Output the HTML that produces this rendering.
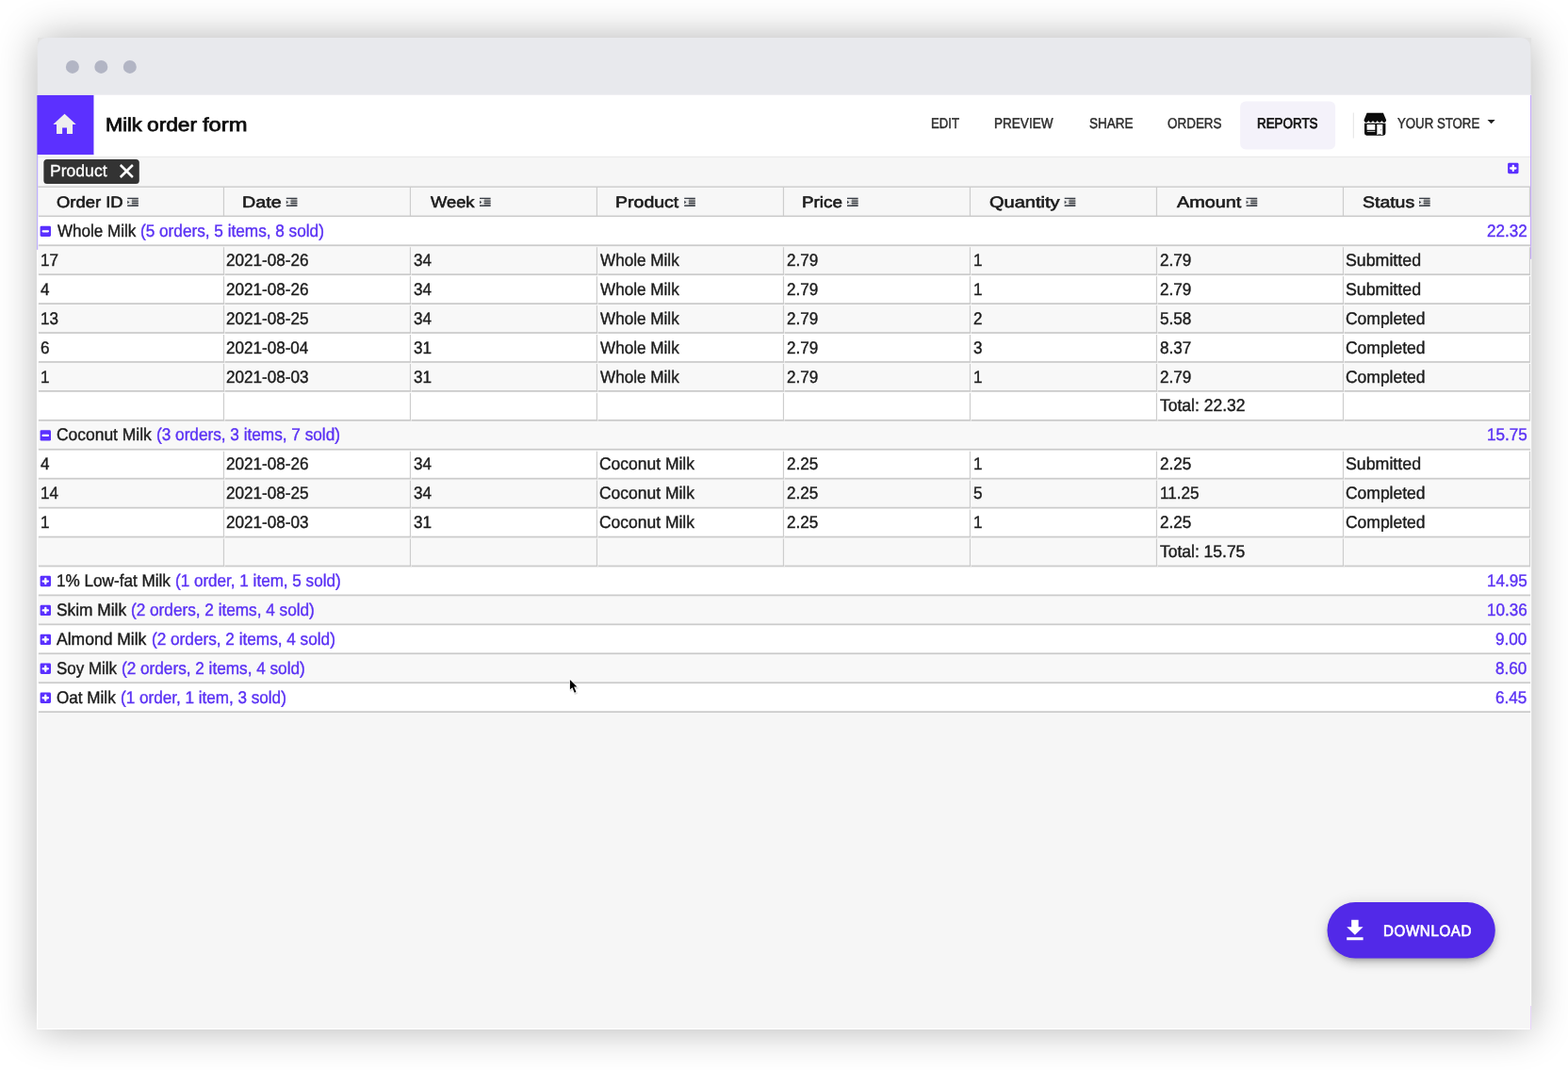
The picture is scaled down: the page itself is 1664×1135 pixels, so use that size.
<!DOCTYPE html>
<html lang="en"><head><meta charset="utf-8"><title>Milk order form - Reports</title>
<style>
html,body{margin:0;padding:0;background:#fff;}
body{width:1664px;height:1135px;position:relative;overflow:hidden;font-family:"Liberation Sans",sans-serif;text-rendering:geometricPrecision;}
#root{position:absolute;left:0;top:0;width:1664px;height:1135px;will-change:transform;}
.L{position:absolute;}
.t{position:absolute;white-space:pre;line-height:1;transform-origin:0 50%;}
.a{position:absolute;}
#shadow{position:absolute;left:40px;top:40px;width:1585px;height:1052px;box-shadow:0 0 40px rgba(0,0,0,.30);background:#e3e3e3;}
#bg{position:absolute;left:0;top:0;}
#dl{position:absolute;left:1409px;top:958px;width:177px;height:58px;border-radius:29px;background:#5229e8;box-shadow:0 3px 5px -1px rgba(0,0,0,.2),0 6px 10px rgba(0,0,0,.14),0 1px 18px rgba(0,0,0,.12);}
</style></head><body><div id="root">
<div id="shadow"></div>

<svg id="bg" width="1664" height="1135" viewBox="0 0 1664 1135"><rect x="39.3" y="99.9" width="1585.8" height="992.1" fill="#f6f6f6"/>
<path d="M39.8 49.9a10 10 0 0 1 10-10H1614.1a10 10 0 0 1 10 10V100.8H39.8z" fill="#e8e9ed"/>
<rect x="39.3" y="1090.9" width="1584.7" height="1.1" fill="#fff"/>
<rect x="1624" y="1067" width="1.1" height="25" fill="#e8d5fa"/>
<circle cx="76.9" cy="70.9" r="7" fill="#b2b5c4"/>
<circle cx="107.3" cy="70.9" r="7" fill="#b2b5c4"/>
<circle cx="137.8" cy="70.9" r="7" fill="#b2b5c4"/>
<rect x="39.3" y="100.8" width="1585.8" height="65" fill="#fff"/>
<rect x="39.3" y="99.9" width="60.15" height="1.05" fill="#f3f5ef"/>
<rect x="39.3" y="165.8" width="1585.8" height="1.3" fill="#ebebeb"/>
<rect x="39.3" y="100.9" width="60.15" height="63" fill="#5c30ff"/>
<rect x="39.3" y="163.5" width="60.15" height=".7" fill="#4a1cf5" opacity=".6"/>
<svg x="53.95" y="117.05" width="29.2" height="29.9" viewBox="0 0 24 24" preserveAspectRatio="none"><path fill="#eee" d="M10 20v-5.1h4V20h5v-8h3L12 3 2 12h3v8z"/></svg>
<rect x="1316.1" y="107.6" width="101" height="50.9" rx="6" fill="#f4f2fa"/>
<rect x="1435.8" y="119.6" width="1.1" height="27" fill="#e6e6e6"/>
<g transform="translate(1447 119)"><path fill="#0b0b0b" d="M3.6 .7h17.3l3.2 7.6c.1 1.3-.9 2.6-2.35 2.6s-2.35-1.1-2.35-2.3c0 1.2-1 2.3-2.35 2.3S14.7 9.8 14.7 8.6c0 1.2-1 2.3-2.35 2.3S10 9.8 10 8.6c0 1.2-1 2.3-2.35 2.3S5.3 9.8 5.3 8.6c0 1.2-1 2.3-2.35 2.3S.4 9.6.5 8.3z"/><path fill="#0b0b0b" d="M1 11.8h22.4v10.5a2.4 2.4 0 0 1-2.4 2.4H3.4A2.4 2.4 0 0 1 1 22.3z"/><rect x="3.6" y="13" width="8.7" height="5.8" fill="#fff"/><rect x="3.8" y="19.9" width="8.5" height=".9" fill="#ddd"/><rect x="14.3" y="13" width="6" height="11" fill="#fff"/><rect x="15.3" y="23.3" width="3.4" height=".8" fill="#333"/><circle cx="18.7" cy="18.8" r=".55" fill="#555"/></g>
<path fill="#222" d="M1578.5 127h8.2l-4.1 4.3z"/>
<rect x="45.6" y="168.4" width="103" height="27.4" rx="4" fill="#fff" opacity=".7"/>
<rect x="46.35" y="169.1" width="101.45" height="25.9" rx="3.5" fill="#333"/>
<path stroke="#fff" stroke-width="2.5" fill="none" d="M127.8 175l13.1 13M140.9 175l-13.1 13"/>
<rect x="1600.1" y="172.8" width="11.4" height="11.35" rx="1.4" fill="#5a30ff"/><path stroke="#fff" stroke-width="2.3" stroke-linecap="round" fill="none" d="M1603.15 178.5h5.3M1605.8 175.95v5.1"/>
<rect x="39.3" y="198.2" width="1584.15" height="31.1" fill="#f7f7f7"/>
<rect x="39.3" y="229.3" width="1584.15" height="30.93" fill="#fff"/>
<rect x="39.3" y="260.23" width="1584.15" height="30.93" fill="#f8f8f8"/>
<rect x="39.3" y="291.16" width="1584.15" height="30.93" fill="#fff"/>
<rect x="39.3" y="322.09" width="1584.15" height="30.93" fill="#f8f8f8"/>
<rect x="39.3" y="353.02" width="1584.15" height="30.93" fill="#fff"/>
<rect x="39.3" y="383.95" width="1584.15" height="30.93" fill="#f8f8f8"/>
<rect x="39.3" y="414.88" width="1584.15" height="30.93" fill="#fff"/>
<rect x="39.3" y="445.81" width="1584.15" height="30.93" fill="#f8f8f8"/>
<rect x="39.3" y="476.74" width="1584.15" height="30.93" fill="#fff"/>
<rect x="39.3" y="507.67" width="1584.15" height="30.93" fill="#f8f8f8"/>
<rect x="39.3" y="538.6" width="1584.15" height="30.93" fill="#fff"/>
<rect x="39.3" y="569.53" width="1584.15" height="30.93" fill="#f8f8f8"/>
<rect x="39.3" y="600.46" width="1584.15" height="30.93" fill="#fff"/>
<rect x="39.3" y="631.39" width="1584.15" height="30.93" fill="#f8f8f8"/>
<rect x="39.3" y="662.32" width="1584.15" height="30.93" fill="#fff"/>
<rect x="39.3" y="693.25" width="1584.15" height="30.93" fill="#f8f8f8"/>
<rect x="39.3" y="724.18" width="1584.15" height="30.93" fill="#fff"/>
<rect x="1624" y="166.5" width="1.1" height="900.5" fill="#fbfbfb"/>
<rect x="39.1" y="264" width="1.15" height="828" fill="#fff"/>
<rect x="1624" y="100.8" width="1.1" height="174" fill="#c4a9fa"/>
<rect x="39.1" y="163.9" width="1.1" height="101" fill="#b9a8ff"/>
<rect x="236.85" y="198.2" width="1.2" height="31.1" fill="#cdcdcd"/>
<rect x="434.85" y="198.2" width="1.2" height="31.1" fill="#cdcdcd"/>
<rect x="632.85" y="198.2" width="1.2" height="31.1" fill="#cdcdcd"/>
<rect x="830.85" y="198.2" width="1.2" height="31.1" fill="#cdcdcd"/>
<rect x="1028.85" y="198.2" width="1.2" height="31.1" fill="#cdcdcd"/>
<rect x="1226.85" y="198.2" width="1.2" height="31.1" fill="#cdcdcd"/>
<rect x="1424.85" y="198.2" width="1.2" height="31.1" fill="#cdcdcd"/>
<rect x="1622.85" y="198.2" width="1.2" height="31.1" fill="#cdcdcd"/>
<rect x="236.85" y="260.23" width="1.2" height="185.58" fill="#cdcdcd"/>
<rect x="434.85" y="260.23" width="1.2" height="185.58" fill="#cdcdcd"/>
<rect x="632.85" y="260.23" width="1.2" height="185.58" fill="#cdcdcd"/>
<rect x="830.85" y="260.23" width="1.2" height="185.58" fill="#cdcdcd"/>
<rect x="1028.85" y="260.23" width="1.2" height="185.58" fill="#cdcdcd"/>
<rect x="1226.85" y="260.23" width="1.2" height="185.58" fill="#cdcdcd"/>
<rect x="1424.85" y="260.23" width="1.2" height="185.58" fill="#cdcdcd"/>
<rect x="1622.85" y="260.23" width="1.2" height="185.58" fill="#cdcdcd"/>
<rect x="236.85" y="476.74" width="1.2" height="123.72" fill="#cdcdcd"/>
<rect x="434.85" y="476.74" width="1.2" height="123.72" fill="#cdcdcd"/>
<rect x="632.85" y="476.74" width="1.2" height="123.72" fill="#cdcdcd"/>
<rect x="830.85" y="476.74" width="1.2" height="123.72" fill="#cdcdcd"/>
<rect x="1028.85" y="476.74" width="1.2" height="123.72" fill="#cdcdcd"/>
<rect x="1226.85" y="476.74" width="1.2" height="123.72" fill="#cdcdcd"/>
<rect x="1424.85" y="476.74" width="1.2" height="123.72" fill="#cdcdcd"/>
<rect x="1622.85" y="476.74" width="1.2" height="123.72" fill="#cdcdcd"/>
<rect x="40.3" y="197.5" width="1583.75" height="1.4" fill="#cbcbcb"/>
<rect x="40.9" y="228.55" width="1583.15" height="1.55" fill="#cbcbcb"/>
<rect x="40.9" y="259.38" width="1583.15" height="1.75" fill="#cbcbcb"/>
<rect x="40.9" y="290.31" width="1583.15" height="1.75" fill="#cbcbcb"/>
<rect x="40.9" y="321.24" width="1583.15" height="1.75" fill="#cbcbcb"/>
<rect x="40.9" y="352.16" width="1583.15" height="1.75" fill="#cbcbcb"/>
<rect x="40.9" y="383.1" width="1583.15" height="1.75" fill="#cbcbcb"/>
<rect x="40.9" y="414.02" width="1583.15" height="1.75" fill="#cbcbcb"/>
<rect x="40.9" y="444.95" width="1583.15" height="1.75" fill="#cbcbcb"/>
<rect x="40.9" y="475.88" width="1583.15" height="1.75" fill="#cbcbcb"/>
<rect x="40.9" y="506.81" width="1583.15" height="1.75" fill="#cbcbcb"/>
<rect x="40.9" y="537.75" width="1583.15" height="1.75" fill="#cbcbcb"/>
<rect x="40.9" y="568.67" width="1583.15" height="1.75" fill="#cbcbcb"/>
<rect x="40.9" y="599.61" width="1583.15" height="1.75" fill="#cbcbcb"/>
<rect x="40.9" y="630.53" width="1583.15" height="1.75" fill="#cbcbcb"/>
<rect x="40.9" y="661.46" width="1583.15" height="1.75" fill="#cbcbcb"/>
<rect x="40.9" y="692.39" width="1583.15" height="1.75" fill="#cbcbcb"/>
<rect x="40.9" y="723.33" width="1583.15" height="1.75" fill="#cbcbcb"/>
<rect x="40.9" y="754.25" width="1583.15" height="1.75" fill="#cbcbcb"/>
<rect x="236.65" y="261.18" width="1.6" height="1.05" fill="#f8f8f8"/>
<rect x="434.65" y="261.18" width="1.6" height="1.05" fill="#f8f8f8"/>
<rect x="632.65" y="261.18" width="1.6" height="1.05" fill="#f8f8f8"/>
<rect x="830.65" y="261.18" width="1.6" height="1.05" fill="#f8f8f8"/>
<rect x="1028.65" y="261.18" width="1.6" height="1.05" fill="#f8f8f8"/>
<rect x="1226.65" y="261.18" width="1.6" height="1.05" fill="#f8f8f8"/>
<rect x="1424.65" y="261.18" width="1.6" height="1.05" fill="#f8f8f8"/>
<rect x="1622.65" y="261.18" width="1.6" height="1.05" fill="#f8f8f8"/>
<rect x="236.65" y="292.11" width="1.6" height="1.05" fill="#fff"/>
<rect x="238.1" y="290.21" width=".85" height="1.95" fill="#eee"/>
<rect x="434.65" y="292.11" width="1.6" height="1.05" fill="#fff"/>
<rect x="436.1" y="290.21" width=".85" height="1.95" fill="#eee"/>
<rect x="632.65" y="292.11" width="1.6" height="1.05" fill="#fff"/>
<rect x="634.1" y="290.21" width=".85" height="1.95" fill="#eee"/>
<rect x="830.65" y="292.11" width="1.6" height="1.05" fill="#fff"/>
<rect x="832.1" y="290.21" width=".85" height="1.95" fill="#eee"/>
<rect x="1028.65" y="292.11" width="1.6" height="1.05" fill="#fff"/>
<rect x="1030.1" y="290.21" width=".85" height="1.95" fill="#eee"/>
<rect x="1226.65" y="292.11" width="1.6" height="1.05" fill="#fff"/>
<rect x="1228.1" y="290.21" width=".85" height="1.95" fill="#eee"/>
<rect x="1424.65" y="292.11" width="1.6" height="1.05" fill="#fff"/>
<rect x="1426.1" y="290.21" width=".85" height="1.95" fill="#eee"/>
<rect x="1622.65" y="292.11" width="1.6" height="1.05" fill="#fff"/>
<rect x="236.65" y="323.04" width="1.6" height="1.05" fill="#f8f8f8"/>
<rect x="238.1" y="321.14" width=".85" height="1.95" fill="#eee"/>
<rect x="434.65" y="323.04" width="1.6" height="1.05" fill="#f8f8f8"/>
<rect x="436.1" y="321.14" width=".85" height="1.95" fill="#eee"/>
<rect x="632.65" y="323.04" width="1.6" height="1.05" fill="#f8f8f8"/>
<rect x="634.1" y="321.14" width=".85" height="1.95" fill="#eee"/>
<rect x="830.65" y="323.04" width="1.6" height="1.05" fill="#f8f8f8"/>
<rect x="832.1" y="321.14" width=".85" height="1.95" fill="#eee"/>
<rect x="1028.65" y="323.04" width="1.6" height="1.05" fill="#f8f8f8"/>
<rect x="1030.1" y="321.14" width=".85" height="1.95" fill="#eee"/>
<rect x="1226.65" y="323.04" width="1.6" height="1.05" fill="#f8f8f8"/>
<rect x="1228.1" y="321.14" width=".85" height="1.95" fill="#eee"/>
<rect x="1424.65" y="323.04" width="1.6" height="1.05" fill="#f8f8f8"/>
<rect x="1426.1" y="321.14" width=".85" height="1.95" fill="#eee"/>
<rect x="1622.65" y="323.04" width="1.6" height="1.05" fill="#f8f8f8"/>
<rect x="236.65" y="353.97" width="1.6" height="1.05" fill="#fff"/>
<rect x="238.1" y="352.07" width=".85" height="1.95" fill="#eee"/>
<rect x="434.65" y="353.97" width="1.6" height="1.05" fill="#fff"/>
<rect x="436.1" y="352.07" width=".85" height="1.95" fill="#eee"/>
<rect x="632.65" y="353.97" width="1.6" height="1.05" fill="#fff"/>
<rect x="634.1" y="352.07" width=".85" height="1.95" fill="#eee"/>
<rect x="830.65" y="353.97" width="1.6" height="1.05" fill="#fff"/>
<rect x="832.1" y="352.07" width=".85" height="1.95" fill="#eee"/>
<rect x="1028.65" y="353.97" width="1.6" height="1.05" fill="#fff"/>
<rect x="1030.1" y="352.07" width=".85" height="1.95" fill="#eee"/>
<rect x="1226.65" y="353.97" width="1.6" height="1.05" fill="#fff"/>
<rect x="1228.1" y="352.07" width=".85" height="1.95" fill="#eee"/>
<rect x="1424.65" y="353.97" width="1.6" height="1.05" fill="#fff"/>
<rect x="1426.1" y="352.07" width=".85" height="1.95" fill="#eee"/>
<rect x="1622.65" y="353.97" width="1.6" height="1.05" fill="#fff"/>
<rect x="236.65" y="384.9" width="1.6" height="1.05" fill="#f8f8f8"/>
<rect x="238.1" y="383" width=".85" height="1.95" fill="#eee"/>
<rect x="434.65" y="384.9" width="1.6" height="1.05" fill="#f8f8f8"/>
<rect x="436.1" y="383" width=".85" height="1.95" fill="#eee"/>
<rect x="632.65" y="384.9" width="1.6" height="1.05" fill="#f8f8f8"/>
<rect x="634.1" y="383" width=".85" height="1.95" fill="#eee"/>
<rect x="830.65" y="384.9" width="1.6" height="1.05" fill="#f8f8f8"/>
<rect x="832.1" y="383" width=".85" height="1.95" fill="#eee"/>
<rect x="1028.65" y="384.9" width="1.6" height="1.05" fill="#f8f8f8"/>
<rect x="1030.1" y="383" width=".85" height="1.95" fill="#eee"/>
<rect x="1226.65" y="384.9" width="1.6" height="1.05" fill="#f8f8f8"/>
<rect x="1228.1" y="383" width=".85" height="1.95" fill="#eee"/>
<rect x="1424.65" y="384.9" width="1.6" height="1.05" fill="#f8f8f8"/>
<rect x="1426.1" y="383" width=".85" height="1.95" fill="#eee"/>
<rect x="1622.65" y="384.9" width="1.6" height="1.05" fill="#f8f8f8"/>
<rect x="236.65" y="415.83" width="1.6" height="1.05" fill="#fff"/>
<rect x="238.1" y="413.93" width=".85" height="1.95" fill="#eee"/>
<rect x="434.65" y="415.83" width="1.6" height="1.05" fill="#fff"/>
<rect x="436.1" y="413.93" width=".85" height="1.95" fill="#eee"/>
<rect x="632.65" y="415.83" width="1.6" height="1.05" fill="#fff"/>
<rect x="634.1" y="413.93" width=".85" height="1.95" fill="#eee"/>
<rect x="830.65" y="415.83" width="1.6" height="1.05" fill="#fff"/>
<rect x="832.1" y="413.93" width=".85" height="1.95" fill="#eee"/>
<rect x="1028.65" y="415.83" width="1.6" height="1.05" fill="#fff"/>
<rect x="1030.1" y="413.93" width=".85" height="1.95" fill="#eee"/>
<rect x="1226.65" y="415.83" width="1.6" height="1.05" fill="#fff"/>
<rect x="1228.1" y="413.93" width=".85" height="1.95" fill="#eee"/>
<rect x="1424.65" y="415.83" width="1.6" height="1.05" fill="#fff"/>
<rect x="1426.1" y="413.93" width=".85" height="1.95" fill="#eee"/>
<rect x="1622.65" y="415.83" width="1.6" height="1.05" fill="#fff"/>
<rect x="238.1" y="444.86" width=".85" height="1.95" fill="#eee"/>
<rect x="436.1" y="444.86" width=".85" height="1.95" fill="#eee"/>
<rect x="634.1" y="444.86" width=".85" height="1.95" fill="#eee"/>
<rect x="832.1" y="444.86" width=".85" height="1.95" fill="#eee"/>
<rect x="1030.1" y="444.86" width=".85" height="1.95" fill="#eee"/>
<rect x="1228.1" y="444.86" width=".85" height="1.95" fill="#eee"/>
<rect x="1426.1" y="444.86" width=".85" height="1.95" fill="#eee"/>
<rect x="236.65" y="477.69" width="1.6" height="1.05" fill="#fff"/>
<rect x="434.65" y="477.69" width="1.6" height="1.05" fill="#fff"/>
<rect x="632.65" y="477.69" width="1.6" height="1.05" fill="#fff"/>
<rect x="830.65" y="477.69" width="1.6" height="1.05" fill="#fff"/>
<rect x="1028.65" y="477.69" width="1.6" height="1.05" fill="#fff"/>
<rect x="1226.65" y="477.69" width="1.6" height="1.05" fill="#fff"/>
<rect x="1424.65" y="477.69" width="1.6" height="1.05" fill="#fff"/>
<rect x="1622.65" y="477.69" width="1.6" height="1.05" fill="#fff"/>
<rect x="236.65" y="508.62" width="1.6" height="1.05" fill="#f8f8f8"/>
<rect x="238.1" y="506.72" width=".85" height="1.95" fill="#eee"/>
<rect x="434.65" y="508.62" width="1.6" height="1.05" fill="#f8f8f8"/>
<rect x="436.1" y="506.72" width=".85" height="1.95" fill="#eee"/>
<rect x="632.65" y="508.62" width="1.6" height="1.05" fill="#f8f8f8"/>
<rect x="634.1" y="506.72" width=".85" height="1.95" fill="#eee"/>
<rect x="830.65" y="508.62" width="1.6" height="1.05" fill="#f8f8f8"/>
<rect x="832.1" y="506.72" width=".85" height="1.95" fill="#eee"/>
<rect x="1028.65" y="508.62" width="1.6" height="1.05" fill="#f8f8f8"/>
<rect x="1030.1" y="506.72" width=".85" height="1.95" fill="#eee"/>
<rect x="1226.65" y="508.62" width="1.6" height="1.05" fill="#f8f8f8"/>
<rect x="1228.1" y="506.72" width=".85" height="1.95" fill="#eee"/>
<rect x="1424.65" y="508.62" width="1.6" height="1.05" fill="#f8f8f8"/>
<rect x="1426.1" y="506.72" width=".85" height="1.95" fill="#eee"/>
<rect x="1622.65" y="508.62" width="1.6" height="1.05" fill="#f8f8f8"/>
<rect x="236.65" y="539.55" width="1.6" height="1.05" fill="#fff"/>
<rect x="238.1" y="537.65" width=".85" height="1.95" fill="#eee"/>
<rect x="434.65" y="539.55" width="1.6" height="1.05" fill="#fff"/>
<rect x="436.1" y="537.65" width=".85" height="1.95" fill="#eee"/>
<rect x="632.65" y="539.55" width="1.6" height="1.05" fill="#fff"/>
<rect x="634.1" y="537.65" width=".85" height="1.95" fill="#eee"/>
<rect x="830.65" y="539.55" width="1.6" height="1.05" fill="#fff"/>
<rect x="832.1" y="537.65" width=".85" height="1.95" fill="#eee"/>
<rect x="1028.65" y="539.55" width="1.6" height="1.05" fill="#fff"/>
<rect x="1030.1" y="537.65" width=".85" height="1.95" fill="#eee"/>
<rect x="1226.65" y="539.55" width="1.6" height="1.05" fill="#fff"/>
<rect x="1228.1" y="537.65" width=".85" height="1.95" fill="#eee"/>
<rect x="1424.65" y="539.55" width="1.6" height="1.05" fill="#fff"/>
<rect x="1426.1" y="537.65" width=".85" height="1.95" fill="#eee"/>
<rect x="1622.65" y="539.55" width="1.6" height="1.05" fill="#fff"/>
<rect x="236.65" y="570.48" width="1.6" height="1.05" fill="#f8f8f8"/>
<rect x="238.1" y="568.58" width=".85" height="1.95" fill="#eee"/>
<rect x="434.65" y="570.48" width="1.6" height="1.05" fill="#f8f8f8"/>
<rect x="436.1" y="568.58" width=".85" height="1.95" fill="#eee"/>
<rect x="632.65" y="570.48" width="1.6" height="1.05" fill="#f8f8f8"/>
<rect x="634.1" y="568.58" width=".85" height="1.95" fill="#eee"/>
<rect x="830.65" y="570.48" width="1.6" height="1.05" fill="#f8f8f8"/>
<rect x="832.1" y="568.58" width=".85" height="1.95" fill="#eee"/>
<rect x="1028.65" y="570.48" width="1.6" height="1.05" fill="#f8f8f8"/>
<rect x="1030.1" y="568.58" width=".85" height="1.95" fill="#eee"/>
<rect x="1226.65" y="570.48" width="1.6" height="1.05" fill="#f8f8f8"/>
<rect x="1228.1" y="568.58" width=".85" height="1.95" fill="#eee"/>
<rect x="1424.65" y="570.48" width="1.6" height="1.05" fill="#f8f8f8"/>
<rect x="1426.1" y="568.58" width=".85" height="1.95" fill="#eee"/>
<rect x="1622.65" y="570.48" width="1.6" height="1.05" fill="#f8f8f8"/>
<rect x="238.1" y="599.51" width=".85" height="1.95" fill="#eee"/>
<rect x="436.1" y="599.51" width=".85" height="1.95" fill="#eee"/>
<rect x="634.1" y="599.51" width=".85" height="1.95" fill="#eee"/>
<rect x="832.1" y="599.51" width=".85" height="1.95" fill="#eee"/>
<rect x="1030.1" y="599.51" width=".85" height="1.95" fill="#eee"/>
<rect x="1228.1" y="599.51" width=".85" height="1.95" fill="#eee"/>
<rect x="1426.1" y="599.51" width=".85" height="1.95" fill="#eee"/>
<g transform="translate(135.2 209.8)"><rect x="4.6" y="1" width="7" height="7.5" fill="#a2a2a2"/><rect x="0" y="1" width="4.6" height="7.5" fill="#e6e6e6"/><path fill="#3a3f47" d="M0 0h11.6v1.3H0zM4.6 2.9h7v1.1h-7zM4.6 5.1h7v1.2h-7zM0 7.6h11.6v1.6H0zM0 3l2.2 1.7L0 6.4z"/></g>
<g transform="translate(303.8 209.8)"><rect x="4.6" y="1" width="7" height="7.5" fill="#a2a2a2"/><rect x="0" y="1" width="4.6" height="7.5" fill="#e6e6e6"/><path fill="#3a3f47" d="M0 0h11.6v1.3H0zM4.6 2.9h7v1.1h-7zM4.6 5.1h7v1.2h-7zM0 7.6h11.6v1.6H0zM0 3l2.2 1.7L0 6.4z"/></g>
<g transform="translate(509 209.8)"><rect x="4.6" y="1" width="7" height="7.5" fill="#a2a2a2"/><rect x="0" y="1" width="4.6" height="7.5" fill="#e6e6e6"/><path fill="#3a3f47" d="M0 0h11.6v1.3H0zM4.6 2.9h7v1.1h-7zM4.6 5.1h7v1.2h-7zM0 7.6h11.6v1.6H0zM0 3l2.2 1.7L0 6.4z"/></g>
<g transform="translate(726.2 209.8)"><rect x="4.6" y="1" width="7" height="7.5" fill="#a2a2a2"/><rect x="0" y="1" width="4.6" height="7.5" fill="#e6e6e6"/><path fill="#3a3f47" d="M0 0h11.6v1.3H0zM4.6 2.9h7v1.1h-7zM4.6 5.1h7v1.2h-7zM0 7.6h11.6v1.6H0zM0 3l2.2 1.7L0 6.4z"/></g>
<g transform="translate(899 209.8)"><rect x="4.6" y="1" width="7" height="7.5" fill="#a2a2a2"/><rect x="0" y="1" width="4.6" height="7.5" fill="#e6e6e6"/><path fill="#3a3f47" d="M0 0h11.6v1.3H0zM4.6 2.9h7v1.1h-7zM4.6 5.1h7v1.2h-7zM0 7.6h11.6v1.6H0zM0 3l2.2 1.7L0 6.4z"/></g>
<g transform="translate(1129.7 209.8)"><rect x="4.6" y="1" width="7" height="7.5" fill="#a2a2a2"/><rect x="0" y="1" width="4.6" height="7.5" fill="#e6e6e6"/><path fill="#3a3f47" d="M0 0h11.6v1.3H0zM4.6 2.9h7v1.1h-7zM4.6 5.1h7v1.2h-7zM0 7.6h11.6v1.6H0zM0 3l2.2 1.7L0 6.4z"/></g>
<g transform="translate(1322.6 209.8)"><rect x="4.6" y="1" width="7" height="7.5" fill="#a2a2a2"/><rect x="0" y="1" width="4.6" height="7.5" fill="#e6e6e6"/><path fill="#3a3f47" d="M0 0h11.6v1.3H0zM4.6 2.9h7v1.1h-7zM4.6 5.1h7v1.2h-7zM0 7.6h11.6v1.6H0zM0 3l2.2 1.7L0 6.4z"/></g>
<g transform="translate(1506 209.8)"><rect x="4.6" y="1" width="7" height="7.5" fill="#a2a2a2"/><rect x="0" y="1" width="4.6" height="7.5" fill="#e6e6e6"/><path fill="#3a3f47" d="M0 0h11.6v1.3H0zM4.6 2.9h7v1.1h-7zM4.6 5.1h7v1.2h-7zM0 7.6h11.6v1.6H0zM0 3l2.2 1.7L0 6.4z"/></g>
<rect x="42.6" y="239.67" width="11.4" height="11.35" rx="1.4" fill="#5a30ff"/><path stroke="#fff" stroke-width="2.3" stroke-linecap="round" fill="none" d="M45.65 245.37h5.3"/>
<rect x="42.6" y="456.18" width="11.4" height="11.35" rx="1.4" fill="#5a30ff"/><path stroke="#fff" stroke-width="2.3" stroke-linecap="round" fill="none" d="M45.65 461.88h5.3"/>
<rect x="42.6" y="610.83" width="11.4" height="11.35" rx="1.4" fill="#5a30ff"/><path stroke="#fff" stroke-width="2.3" stroke-linecap="round" fill="none" d="M45.65 616.53h5.3M48.3 613.98v5.1"/>
<rect x="42.6" y="641.76" width="11.4" height="11.35" rx="1.4" fill="#5a30ff"/><path stroke="#fff" stroke-width="2.3" stroke-linecap="round" fill="none" d="M45.65 647.46h5.3M48.3 644.91v5.1"/>
<rect x="42.6" y="672.69" width="11.4" height="11.35" rx="1.4" fill="#5a30ff"/><path stroke="#fff" stroke-width="2.3" stroke-linecap="round" fill="none" d="M45.65 678.39h5.3M48.3 675.84v5.1"/>
<rect x="42.6" y="703.62" width="11.4" height="11.35" rx="1.4" fill="#5a30ff"/><path stroke="#fff" stroke-width="2.3" stroke-linecap="round" fill="none" d="M45.65 709.32h5.3M48.3 706.77v5.1"/>
<rect x="42.6" y="734.55" width="11.4" height="11.35" rx="1.4" fill="#5a30ff"/><path stroke="#fff" stroke-width="2.3" stroke-linecap="round" fill="none" d="M45.65 740.25h5.3M48.3 737.7v5.1"/>
<path fill="#000" opacity=".13" stroke="#000" stroke-width="1.6" stroke-linejoin="round" d="M605.5 722.4v10.4l2.5-2.2 2.3 5.5 1.7-.7-2.3-5.4h3.3z"/>
<path fill="#000" stroke="#fff" stroke-width="1.1" stroke-linejoin="round" paint-order="stroke" d="M604.9 721v10.4l2.5-2.2 2.3 5.5 1.7-.7-2.3-5.4h3.3z"/></svg>
<div class="L" role="heading" style="left:105px;top:117px;width:170px;height:31px;"><span class="t" style="left:6.69px;top:6px;font-size:20px;color:#0d0d0d;-webkit-text-stroke:0.75px #0d0d0d;transform:scaleX(1.0881);">Milk </span><span class="t" style="left:50.77px;top:6px;font-size:20px;color:#0d0d0d;-webkit-text-stroke:0.75px #0d0d0d;transform:scaleX(1.1366);">order </span><span class="t" style="left:110.14px;top:6px;font-size:20px;color:#0d0d0d;-webkit-text-stroke:0.75px #0d0d0d;transform:scaleX(1.1848);">form</span></div>
<div class="L" role="navigation" style="left:980px;top:114px;width:600px;height:31px;"><span class="t" role="link" style="left:7.85px;top:10px;font-size:15.5px;color:#2b2b2b;-webkit-text-stroke:0.45px #2b2b2b;transform:scaleX(0.8485);">EDIT</span><span class="t" role="link" style="left:75.31px;top:10px;font-size:15.5px;color:#2b2b2b;-webkit-text-stroke:0.45px #2b2b2b;transform:scaleX(0.8741);">PREVIEW</span><span class="t" role="link" style="left:175.5px;top:10px;font-size:15.5px;color:#2b2b2b;-webkit-text-stroke:0.45px #2b2b2b;transform:scaleX(0.8713);">SHARE</span><span class="t" role="link" style="left:259.49px;top:10px;font-size:15.5px;color:#2b2b2b;-webkit-text-stroke:0.45px #2b2b2b;transform:scaleX(0.8674);">ORDERS</span><span class="t" role="link" style="left:354.15px;top:10px;font-size:15.5px;color:#0d0d0d;-webkit-text-stroke:0.7px #0d0d0d;transform:scaleX(0.8641);">REPORTS</span><span class="t" role="link" style="left:502.51px;top:10px;font-size:15.5px;color:#2b2b2b;-webkit-text-stroke:0.45px #2b2b2b;transform:scaleX(0.8537);">YOUR STORE</span></div>
<div class="L" role="button" style="left:46px;top:165px;width:104px;height:31px;"><span class="t" style="left:6.51px;top:8px;font-size:17.5px;color:#fff;-webkit-text-stroke:0.3px #fff;transform:scaleX(1.0038);">Product</span></div>
<div class="L" role="row" style="left:40px;top:198px;width:1584px;height:31px;"><span class="t" role="columnheader" style="left:19.93px;top:9px;font-size:16.6px;color:#1c1c1c;-webkit-text-stroke:0.6px #1c1c1c;transform:scaleX(1.1091);">Order ID</span><span class="t" role="columnheader" style="left:217.48px;top:9px;font-size:16.6px;color:#1c1c1c;-webkit-text-stroke:0.6px #1c1c1c;transform:scaleX(1.1868);">Date</span><span class="t" role="columnheader" style="left:416.81px;top:9px;font-size:16.6px;color:#1c1c1c;-webkit-text-stroke:0.6px #1c1c1c;transform:scaleX(1.1048);">Week</span><span class="t" role="columnheader" style="left:613.4px;top:9px;font-size:16.6px;color:#1c1c1c;-webkit-text-stroke:0.6px #1c1c1c;transform:scaleX(1.1766);">Product</span><span class="t" role="columnheader" style="left:811.3px;top:9px;font-size:16.6px;color:#1c1c1c;-webkit-text-stroke:0.6px #1c1c1c;transform:scaleX(1.1363);">Price</span><span class="t" role="columnheader" style="left:1009.55px;top:9px;font-size:16.6px;color:#1c1c1c;-webkit-text-stroke:0.6px #1c1c1c;transform:scaleX(1.2065);">Quantity</span><span class="t" role="columnheader" style="left:1208.84px;top:9px;font-size:16.6px;color:#1c1c1c;-webkit-text-stroke:0.6px #1c1c1c;transform:scaleX(1.1934);">Amount</span><span class="t" role="columnheader" style="left:1405.9px;top:9px;font-size:16.6px;color:#1c1c1c;-webkit-text-stroke:0.6px #1c1c1c;transform:scaleX(1.1730);">Status</span></div>
<div class="L" role="row" style="left:40px;top:229px;width:1584px;height:31px;"><span class="t" role="cell" style="left:20.82px;top:7px;font-size:18.3px;color:#1b1b1b;-webkit-text-stroke:0.4px #1b1b1b;transform:scaleX(0.9317);">Whole Milk</span><span class="t" role="cell" style="left:108.93px;top:7px;font-size:18.3px;color:#5a31f4;-webkit-text-stroke:0.4px #5a31f4;transform:scaleX(0.9402);">(5 orders, 5 items, 8 sold)</span><span class="t" role="cell" style="left:1537.96px;top:7px;font-size:18.3px;color:#5a31f4;-webkit-text-stroke:0.4px #5a31f4;transform:scaleX(0.9350);">22.32</span></div>
<div class="L" role="row" style="left:40px;top:260px;width:1584px;height:31px;"><span class="t" role="cell" style="left:2.5px;top:7px;font-size:18.3px;color:#1b1b1b;-webkit-text-stroke:0.4px #1b1b1b;transform:scaleX(0.9350);">17</span><span class="t" role="cell" style="left:200.49px;top:7px;font-size:18.3px;color:#1b1b1b;-webkit-text-stroke:0.4px #1b1b1b;transform:scaleX(0.9369);">2021-08-26</span><span class="t" role="cell" style="left:398.5px;top:7px;font-size:18.3px;color:#1b1b1b;-webkit-text-stroke:0.4px #1b1b1b;transform:scaleX(0.9350);">34</span><span class="t" role="cell" style="left:597.07px;top:7px;font-size:18.3px;color:#1b1b1b;-webkit-text-stroke:0.4px #1b1b1b;transform:scaleX(0.9362);">Whole Milk</span><span class="t" role="cell" style="left:794.5px;top:7px;font-size:18.3px;color:#1b1b1b;-webkit-text-stroke:0.4px #1b1b1b;transform:scaleX(0.9350);">2.79</span><span class="t" role="cell" style="left:992.5px;top:7px;font-size:18.3px;color:#1b1b1b;-webkit-text-stroke:0.4px #1b1b1b;transform:scaleX(0.9350);">1</span><span class="t" role="cell" style="left:1190.5px;top:7px;font-size:18.3px;color:#1b1b1b;-webkit-text-stroke:0.4px #1b1b1b;transform:scaleX(0.9350);">2.79</span><span class="t" role="cell" style="left:1388.03px;top:7px;font-size:18.3px;color:#1b1b1b;-webkit-text-stroke:0.4px #1b1b1b;transform:scaleX(0.9721);">Submitted</span></div>
<div class="L" role="row" style="left:40px;top:291px;width:1584px;height:31px;"><span class="t" role="cell" style="left:2.5px;top:7px;font-size:18.3px;color:#1b1b1b;-webkit-text-stroke:0.4px #1b1b1b;transform:scaleX(0.9350);">4</span><span class="t" role="cell" style="left:200.49px;top:7px;font-size:18.3px;color:#1b1b1b;-webkit-text-stroke:0.4px #1b1b1b;transform:scaleX(0.9369);">2021-08-26</span><span class="t" role="cell" style="left:398.5px;top:7px;font-size:18.3px;color:#1b1b1b;-webkit-text-stroke:0.4px #1b1b1b;transform:scaleX(0.9350);">34</span><span class="t" role="cell" style="left:597.07px;top:7px;font-size:18.3px;color:#1b1b1b;-webkit-text-stroke:0.4px #1b1b1b;transform:scaleX(0.9362);">Whole Milk</span><span class="t" role="cell" style="left:794.5px;top:7px;font-size:18.3px;color:#1b1b1b;-webkit-text-stroke:0.4px #1b1b1b;transform:scaleX(0.9350);">2.79</span><span class="t" role="cell" style="left:992.5px;top:7px;font-size:18.3px;color:#1b1b1b;-webkit-text-stroke:0.4px #1b1b1b;transform:scaleX(0.9350);">1</span><span class="t" role="cell" style="left:1190.5px;top:7px;font-size:18.3px;color:#1b1b1b;-webkit-text-stroke:0.4px #1b1b1b;transform:scaleX(0.9350);">2.79</span><span class="t" role="cell" style="left:1388.03px;top:7px;font-size:18.3px;color:#1b1b1b;-webkit-text-stroke:0.4px #1b1b1b;transform:scaleX(0.9721);">Submitted</span></div>
<div class="L" role="row" style="left:40px;top:322px;width:1584px;height:31px;"><span class="t" role="cell" style="left:2.5px;top:7px;font-size:18.3px;color:#1b1b1b;-webkit-text-stroke:0.4px #1b1b1b;transform:scaleX(0.9350);">13</span><span class="t" role="cell" style="left:200.49px;top:7px;font-size:18.3px;color:#1b1b1b;-webkit-text-stroke:0.4px #1b1b1b;transform:scaleX(0.9365);">2021-08-25</span><span class="t" role="cell" style="left:398.5px;top:7px;font-size:18.3px;color:#1b1b1b;-webkit-text-stroke:0.4px #1b1b1b;transform:scaleX(0.9350);">34</span><span class="t" role="cell" style="left:597.07px;top:7px;font-size:18.3px;color:#1b1b1b;-webkit-text-stroke:0.4px #1b1b1b;transform:scaleX(0.9362);">Whole Milk</span><span class="t" role="cell" style="left:794.5px;top:7px;font-size:18.3px;color:#1b1b1b;-webkit-text-stroke:0.4px #1b1b1b;transform:scaleX(0.9350);">2.79</span><span class="t" role="cell" style="left:992.5px;top:7px;font-size:18.3px;color:#1b1b1b;-webkit-text-stroke:0.4px #1b1b1b;transform:scaleX(0.9350);">2</span><span class="t" role="cell" style="left:1190.5px;top:7px;font-size:18.3px;color:#1b1b1b;-webkit-text-stroke:0.4px #1b1b1b;transform:scaleX(0.9350);">5.58</span><span class="t" role="cell" style="left:1387.96px;top:7px;font-size:18.3px;color:#1b1b1b;-webkit-text-stroke:0.4px #1b1b1b;transform:scaleX(0.9556);">Completed</span></div>
<div class="L" role="row" style="left:40px;top:353px;width:1584px;height:31px;"><span class="t" role="cell" style="left:2.5px;top:7px;font-size:18.3px;color:#1b1b1b;-webkit-text-stroke:0.4px #1b1b1b;transform:scaleX(0.9350);">6</span><span class="t" role="cell" style="left:200.49px;top:7px;font-size:18.3px;color:#1b1b1b;-webkit-text-stroke:0.4px #1b1b1b;transform:scaleX(0.9341);">2021-08-04</span><span class="t" role="cell" style="left:398.5px;top:7px;font-size:18.3px;color:#1b1b1b;-webkit-text-stroke:0.4px #1b1b1b;transform:scaleX(0.9350);">31</span><span class="t" role="cell" style="left:597.07px;top:7px;font-size:18.3px;color:#1b1b1b;-webkit-text-stroke:0.4px #1b1b1b;transform:scaleX(0.9362);">Whole Milk</span><span class="t" role="cell" style="left:794.5px;top:7px;font-size:18.3px;color:#1b1b1b;-webkit-text-stroke:0.4px #1b1b1b;transform:scaleX(0.9350);">2.79</span><span class="t" role="cell" style="left:992.5px;top:7px;font-size:18.3px;color:#1b1b1b;-webkit-text-stroke:0.4px #1b1b1b;transform:scaleX(0.9350);">3</span><span class="t" role="cell" style="left:1190.5px;top:7px;font-size:18.3px;color:#1b1b1b;-webkit-text-stroke:0.4px #1b1b1b;transform:scaleX(0.9350);">8.37</span><span class="t" role="cell" style="left:1387.96px;top:7px;font-size:18.3px;color:#1b1b1b;-webkit-text-stroke:0.4px #1b1b1b;transform:scaleX(0.9556);">Completed</span></div>
<div class="L" role="row" style="left:40px;top:384px;width:1584px;height:31px;"><span class="t" role="cell" style="left:2.5px;top:7px;font-size:18.3px;color:#1b1b1b;-webkit-text-stroke:0.4px #1b1b1b;transform:scaleX(0.9350);">1</span><span class="t" role="cell" style="left:200.49px;top:7px;font-size:18.3px;color:#1b1b1b;-webkit-text-stroke:0.4px #1b1b1b;transform:scaleX(0.9369);">2021-08-03</span><span class="t" role="cell" style="left:398.5px;top:7px;font-size:18.3px;color:#1b1b1b;-webkit-text-stroke:0.4px #1b1b1b;transform:scaleX(0.9350);">31</span><span class="t" role="cell" style="left:597.07px;top:7px;font-size:18.3px;color:#1b1b1b;-webkit-text-stroke:0.4px #1b1b1b;transform:scaleX(0.9362);">Whole Milk</span><span class="t" role="cell" style="left:794.5px;top:7px;font-size:18.3px;color:#1b1b1b;-webkit-text-stroke:0.4px #1b1b1b;transform:scaleX(0.9350);">2.79</span><span class="t" role="cell" style="left:992.5px;top:7px;font-size:18.3px;color:#1b1b1b;-webkit-text-stroke:0.4px #1b1b1b;transform:scaleX(0.9350);">1</span><span class="t" role="cell" style="left:1190.5px;top:7px;font-size:18.3px;color:#1b1b1b;-webkit-text-stroke:0.4px #1b1b1b;transform:scaleX(0.9350);">2.79</span><span class="t" role="cell" style="left:1387.96px;top:7px;font-size:18.3px;color:#1b1b1b;-webkit-text-stroke:0.4px #1b1b1b;transform:scaleX(0.9556);">Completed</span></div>
<div class="L" role="row" style="left:40px;top:414px;width:1584px;height:31px;"><span class="t" role="cell" style="left:1190.76px;top:7px;font-size:18.3px;color:#1b1b1b;-webkit-text-stroke:0.4px #1b1b1b;transform:scaleX(0.9571);">Total: 22.32</span></div>
<div class="L" role="row" style="left:40px;top:445px;width:1584px;height:31px;"><span class="t" role="cell" style="left:20.01px;top:7px;font-size:18.3px;color:#1b1b1b;-webkit-text-stroke:0.4px #1b1b1b;transform:scaleX(0.9537);">Coconut Milk</span><span class="t" role="cell" style="left:125.53px;top:7px;font-size:18.3px;color:#5a31f4;-webkit-text-stroke:0.4px #5a31f4;transform:scaleX(0.9405);">(3 orders, 3 items, 7 sold)</span><span class="t" role="cell" style="left:1537.82px;top:7px;font-size:18.3px;color:#5a31f4;-webkit-text-stroke:0.4px #5a31f4;transform:scaleX(0.9350);">15.75</span></div>
<div class="L" role="row" style="left:40px;top:476px;width:1584px;height:31px;"><span class="t" role="cell" style="left:2.5px;top:7px;font-size:18.3px;color:#1b1b1b;-webkit-text-stroke:0.4px #1b1b1b;transform:scaleX(0.9350);">4</span><span class="t" role="cell" style="left:200.49px;top:7px;font-size:18.3px;color:#1b1b1b;-webkit-text-stroke:0.4px #1b1b1b;transform:scaleX(0.9369);">2021-08-26</span><span class="t" role="cell" style="left:398.5px;top:7px;font-size:18.3px;color:#1b1b1b;-webkit-text-stroke:0.4px #1b1b1b;transform:scaleX(0.9350);">34</span><span class="t" role="cell" style="left:596.46px;top:7px;font-size:18.3px;color:#1b1b1b;-webkit-text-stroke:0.4px #1b1b1b;transform:scaleX(0.9557);">Coconut Milk</span><span class="t" role="cell" style="left:794.5px;top:7px;font-size:18.3px;color:#1b1b1b;-webkit-text-stroke:0.4px #1b1b1b;transform:scaleX(0.9350);">2.25</span><span class="t" role="cell" style="left:992.5px;top:7px;font-size:18.3px;color:#1b1b1b;-webkit-text-stroke:0.4px #1b1b1b;transform:scaleX(0.9350);">1</span><span class="t" role="cell" style="left:1190.5px;top:7px;font-size:18.3px;color:#1b1b1b;-webkit-text-stroke:0.4px #1b1b1b;transform:scaleX(0.9350);">2.25</span><span class="t" role="cell" style="left:1388.03px;top:7px;font-size:18.3px;color:#1b1b1b;-webkit-text-stroke:0.4px #1b1b1b;transform:scaleX(0.9721);">Submitted</span></div>
<div class="L" role="row" style="left:40px;top:507px;width:1584px;height:31px;"><span class="t" role="cell" style="left:2.5px;top:7px;font-size:18.3px;color:#1b1b1b;-webkit-text-stroke:0.4px #1b1b1b;transform:scaleX(0.9350);">14</span><span class="t" role="cell" style="left:200.49px;top:7px;font-size:18.3px;color:#1b1b1b;-webkit-text-stroke:0.4px #1b1b1b;transform:scaleX(0.9365);">2021-08-25</span><span class="t" role="cell" style="left:398.5px;top:7px;font-size:18.3px;color:#1b1b1b;-webkit-text-stroke:0.4px #1b1b1b;transform:scaleX(0.9350);">34</span><span class="t" role="cell" style="left:596.46px;top:7px;font-size:18.3px;color:#1b1b1b;-webkit-text-stroke:0.4px #1b1b1b;transform:scaleX(0.9557);">Coconut Milk</span><span class="t" role="cell" style="left:794.5px;top:7px;font-size:18.3px;color:#1b1b1b;-webkit-text-stroke:0.4px #1b1b1b;transform:scaleX(0.9350);">2.25</span><span class="t" role="cell" style="left:992.5px;top:7px;font-size:18.3px;color:#1b1b1b;-webkit-text-stroke:0.4px #1b1b1b;transform:scaleX(0.9350);">5</span><span class="t" role="cell" style="left:1190.5px;top:7px;font-size:18.3px;color:#1b1b1b;-webkit-text-stroke:0.4px #1b1b1b;transform:scaleX(0.9350);">11.25</span><span class="t" role="cell" style="left:1387.96px;top:7px;font-size:18.3px;color:#1b1b1b;-webkit-text-stroke:0.4px #1b1b1b;transform:scaleX(0.9556);">Completed</span></div>
<div class="L" role="row" style="left:40px;top:538px;width:1584px;height:31px;"><span class="t" role="cell" style="left:2.5px;top:7px;font-size:18.3px;color:#1b1b1b;-webkit-text-stroke:0.4px #1b1b1b;transform:scaleX(0.9350);">1</span><span class="t" role="cell" style="left:200.49px;top:7px;font-size:18.3px;color:#1b1b1b;-webkit-text-stroke:0.4px #1b1b1b;transform:scaleX(0.9369);">2021-08-03</span><span class="t" role="cell" style="left:398.5px;top:7px;font-size:18.3px;color:#1b1b1b;-webkit-text-stroke:0.4px #1b1b1b;transform:scaleX(0.9350);">31</span><span class="t" role="cell" style="left:596.46px;top:7px;font-size:18.3px;color:#1b1b1b;-webkit-text-stroke:0.4px #1b1b1b;transform:scaleX(0.9557);">Coconut Milk</span><span class="t" role="cell" style="left:794.5px;top:7px;font-size:18.3px;color:#1b1b1b;-webkit-text-stroke:0.4px #1b1b1b;transform:scaleX(0.9350);">2.25</span><span class="t" role="cell" style="left:992.5px;top:7px;font-size:18.3px;color:#1b1b1b;-webkit-text-stroke:0.4px #1b1b1b;transform:scaleX(0.9350);">1</span><span class="t" role="cell" style="left:1190.5px;top:7px;font-size:18.3px;color:#1b1b1b;-webkit-text-stroke:0.4px #1b1b1b;transform:scaleX(0.9350);">2.25</span><span class="t" role="cell" style="left:1387.96px;top:7px;font-size:18.3px;color:#1b1b1b;-webkit-text-stroke:0.4px #1b1b1b;transform:scaleX(0.9556);">Completed</span></div>
<div class="L" role="row" style="left:40px;top:569px;width:1584px;height:31px;"><span class="t" role="cell" style="left:1190.76px;top:7px;font-size:18.3px;color:#1b1b1b;-webkit-text-stroke:0.4px #1b1b1b;transform:scaleX(0.9556);">Total: 15.75</span></div>
<div class="L" role="row" style="left:40px;top:600px;width:1584px;height:31px;"><span class="t" role="cell" style="left:19.59px;top:7px;font-size:18.3px;color:#1b1b1b;-webkit-text-stroke:0.4px #1b1b1b;transform:scaleX(0.9373);">1% Low-fat Milk</span><span class="t" role="cell" style="left:145.64px;top:7px;font-size:18.3px;color:#5a31f4;-webkit-text-stroke:0.4px #5a31f4;transform:scaleX(0.9343);">(1 order, 1 item, 5 sold)</span><span class="t" role="cell" style="left:1537.82px;top:7px;font-size:18.3px;color:#5a31f4;-webkit-text-stroke:0.4px #5a31f4;transform:scaleX(0.9350);">14.95</span></div>
<div class="L" role="row" style="left:40px;top:631px;width:1584px;height:31px;"><span class="t" role="cell" style="left:20.1px;top:7px;font-size:18.3px;color:#1b1b1b;-webkit-text-stroke:0.4px #1b1b1b;transform:scaleX(0.9473);">Skim Milk</span><span class="t" role="cell" style="left:99.03px;top:7px;font-size:18.3px;color:#5a31f4;-webkit-text-stroke:0.4px #5a31f4;transform:scaleX(0.9400);">(2 orders, 2 items, 4 sold)</span><span class="t" role="cell" style="left:1537.86px;top:7px;font-size:18.3px;color:#5a31f4;-webkit-text-stroke:0.4px #5a31f4;transform:scaleX(0.9350);">10.36</span></div>
<div class="L" role="row" style="left:40px;top:662px;width:1584px;height:31px;"><span class="t" role="cell" style="left:20.45px;top:7px;font-size:18.3px;color:#1b1b1b;-webkit-text-stroke:0.4px #1b1b1b;transform:scaleX(0.9579);">Almond Milk</span><span class="t" role="cell" style="left:120.63px;top:7px;font-size:18.3px;color:#5a31f4;-webkit-text-stroke:0.4px #5a31f4;transform:scaleX(0.9402);">(2 orders, 2 items, 4 sold)</span><span class="t" role="cell" style="left:1547.27px;top:7px;font-size:18.3px;color:#5a31f4;-webkit-text-stroke:0.4px #5a31f4;transform:scaleX(0.9350);">9.00</span></div>
<div class="L" role="row" style="left:40px;top:693px;width:1584px;height:31px;"><span class="t" role="cell" style="left:20.12px;top:7px;font-size:18.3px;color:#1b1b1b;-webkit-text-stroke:0.4px #1b1b1b;transform:scaleX(0.9263);">Soy Milk</span><span class="t" role="cell" style="left:89.03px;top:7px;font-size:18.3px;color:#5a31f4;-webkit-text-stroke:0.4px #5a31f4;transform:scaleX(0.9395);">(2 orders, 2 items, 4 sold)</span><span class="t" role="cell" style="left:1547.27px;top:7px;font-size:18.3px;color:#5a31f4;-webkit-text-stroke:0.4px #5a31f4;transform:scaleX(0.9350);">8.60</span></div>
<div class="L" role="row" style="left:40px;top:724px;width:1584px;height:31px;"><span class="t" role="cell" style="left:20.09px;top:7px;font-size:18.3px;color:#1b1b1b;-webkit-text-stroke:0.4px #1b1b1b;transform:scaleX(0.9349);">Oat Milk</span><span class="t" role="cell" style="left:87.74px;top:7px;font-size:18.3px;color:#5a31f4;-webkit-text-stroke:0.4px #5a31f4;transform:scaleX(0.9354);">(1 order, 1 item, 3 sold)</span><span class="t" role="cell" style="left:1547.32px;top:7px;font-size:18.3px;color:#5a31f4;-webkit-text-stroke:0.4px #5a31f4;transform:scaleX(0.9350);">6.45</span></div>
<div id="dl"></div>
<svg class="a" style="left:1400px;top:950px" width="200" height="75" viewBox="1400 950 200 75"><rect x="1408.5" y="957.1" width="178.3" height="59.4" rx="29.7" fill="#5229e8"/></svg>
<svg class="a" style="left:1423.35px;top:972.05px" width="29.8" height="29.8" viewBox="0 0 24 24"><path fill="#fff" d="M19 9h-4V3H9v6H5l7 7 7-7zM5 18v2.400h14V18z"/></svg>
<div class="L" role="button" style="left:1460px;top:971px;width:110px;height:31px;"><span class="t" style="left:8.21px;top:9px;font-size:16.6px;color:#fff;letter-spacing:0.7px;-webkit-text-stroke:0.7px #fff;transform:scaleX(0.9112);">DOWNLOAD</span></div>
</div></body></html>
